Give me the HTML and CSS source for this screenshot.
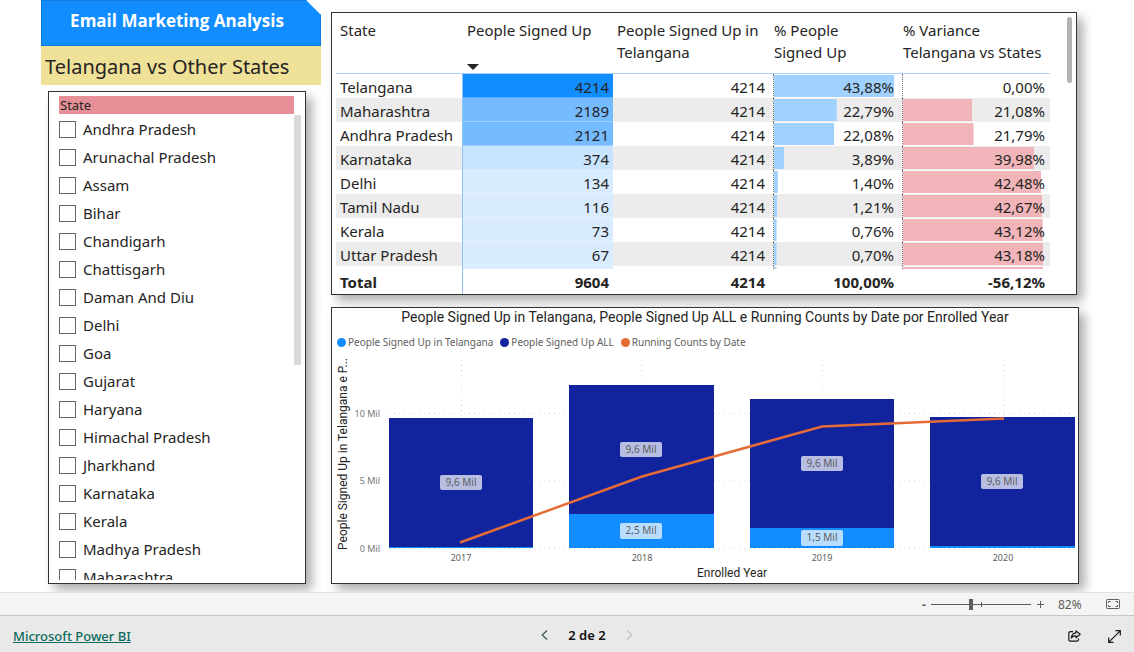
FILE: index.html
```html
<!DOCTYPE html>
<html lang="en">
<head>
<meta charset="utf-8">
<title>Email Marketing Analysis</title>
<link rel="stylesheet" href="styles.css">
</head>
<body>
<main class="report">
  <section class="side">
    <h1 class="banner">Email Marketing Analysis</h1>
    <h2 class="subtitle">Telangana vs Other States</h2>
    <div class="card slicer">
      <h3 class="slicer-title">State</h3>
      <div class="slicer-body">
        <div class="slicer-list">
          <label class="option"><input type="checkbox">Andhra Pradesh</label>
          <label class="option"><input type="checkbox">Arunachal Pradesh</label>
          <label class="option"><input type="checkbox">Assam</label>
          <label class="option"><input type="checkbox">Bihar</label>
          <label class="option"><input type="checkbox">Chandigarh</label>
          <label class="option"><input type="checkbox">Chattisgarh</label>
          <label class="option"><input type="checkbox">Daman And Diu</label>
          <label class="option"><input type="checkbox">Delhi</label>
          <label class="option"><input type="checkbox">Goa</label>
          <label class="option"><input type="checkbox">Gujarat</label>
          <label class="option"><input type="checkbox">Haryana</label>
          <label class="option"><input type="checkbox">Himachal Pradesh</label>
          <label class="option"><input type="checkbox">Jharkhand</label>
          <label class="option"><input type="checkbox">Karnataka</label>
          <label class="option"><input type="checkbox">Kerala</label>
          <label class="option"><input type="checkbox">Madhya Pradesh</label>
          <label class="option"><input type="checkbox">Maharashtra</label>
        </div>
        <div class="slicer-scroll"></div>
      </div>
    </div>
  </section>

  <section class="content">
    <div class="card table-card">
      <table class="data">
        <colgroup><col class="c-state"><col class="c-signed"><col class="c-tel"><col class="c-pct"><col class="c-var"></colgroup>
        <thead>
          <tr>
            <th scope="col">State</th>
            <th scope="col" class="sorted"><span>People Signed Up</span><svg class="sort" width="12" height="6" viewBox="0 0 12 6"><path d="M0 0h12L6 6z" fill="#252423"/></svg></th>
            <th scope="col">People Signed Up in<br>Telangana</th>
            <th scope="col">% People<br>Signed Up</th>
            <th scope="col">% Variance<br>Telangana vs States</th>
          </tr>
        </thead>
        <tbody>
          <tr><td>Telangana</td><td class="heat h1">4214</td><td>4214</td><td class="bar blue" style="--w:94%">43,88%</td><td class="bar red" style="--w:0%">0,00%</td></tr>
          <tr><td>Maharashtra</td><td class="heat h2">2189</td><td>4214</td><td class="bar blue" style="--w:49%">22,79%</td><td class="bar red" style="--w:47%">21,08%</td></tr>
          <tr><td>Andhra Pradesh</td><td class="heat h2">2121</td><td>4214</td><td class="bar blue" style="--w:47%">22,08%</td><td class="bar red" style="--w:48%">21,79%</td></tr>
          <tr><td>Karnataka</td><td class="heat h3">374</td><td>4214</td><td class="bar blue" style="--w:8%">3,89%</td><td class="bar red" style="--w:89%">39,98%</td></tr>
          <tr><td>Delhi</td><td class="heat h4">134</td><td>4214</td><td class="bar blue" style="--w:3%">1,40%</td><td class="bar red" style="--w:94%">42,48%</td></tr>
          <tr><td>Tamil Nadu</td><td class="heat h4">116</td><td>4214</td><td class="bar blue" style="--w:2.5%">1,21%</td><td class="bar red" style="--w:94.5%">42,67%</td></tr>
          <tr><td>Kerala</td><td class="heat h4">73</td><td>4214</td><td class="bar blue" style="--w:2%">0,76%</td><td class="bar red" style="--w:95%">43,12%</td></tr>
          <tr><td>Uttar Pradesh</td><td class="heat h4">67</td><td>4214</td><td class="bar blue" style="--w:2%">0,70%</td><td class="bar red" style="--w:95.5%">43,18%</td></tr>
          <tr class="peek"><td></td><td class="heat h4"></td><td></td><td class="bar blue" style="--w:2%"></td><td class="bar red" style="--w:95.5%"></td></tr>
        </tbody>
        <tfoot>
          <tr><th scope="row">Total</th><td>9604</td><td>4214</td><td>100,00%</td><td>-56,12%</td></tr>
        </tfoot>
      </table>
      <div class="table-scroll"></div>
    </div>

    <div class="card chart-card">
      <h3 class="chart-title">People Signed Up in Telangana, People Signed Up ALL e Running Counts by Date por Enrolled Year</h3>
      <ul class="legend">
        <li><i class="dot dot-tel"></i>People Signed Up in Telangana</li>
        <li><i class="dot dot-all"></i>People Signed Up ALL</li>
        <li><i class="dot dot-run"></i>Running Counts by Date</li>
      </ul>
      <svg class="plot" viewBox="0 0 746 230" role="img" aria-label="People signed up by enrolled year">
        <g class="grid">
          <path d="M57 61.500H742M57 129H742M57 196.500H742"/>
          <path d="M129.500 8V197M310 8V197M490.500 8V197M671.500 8V197"/>
        </g>
        <g fill="#12239e">
          <rect x="57" y="66" width="144" height="130"/>
          <rect x="237" y="33" width="145" height="130"/>
          <rect x="418" y="47" width="144" height="129"/>
          <rect x="598" y="65" width="145" height="129"/>
        </g>
        <g fill="#118dff">
          <rect x="57" y="195" width="144" height="1"/>
          <rect x="237" y="162" width="145" height="34"/>
          <rect x="418" y="176" width="144" height="20"/>
          <rect x="598" y="194" width="145" height="2"/>
        </g>
        <g class="badges">
          <rect x="108" y="123" width="42" height="15" rx="2"/>
          <rect x="288" y="90" width="42" height="15" rx="2"/>
          <rect x="288" y="171" width="42" height="16" rx="2"/>
          <rect x="469" y="104" width="42" height="15" rx="2"/>
          <rect x="469" y="178" width="42" height="16" rx="2"/>
          <rect x="649" y="122" width="42" height="15" rx="2"/>
        </g>
        <g class="badge-text">
          <text x="129" y="134">9,6 Mil</text>
          <text x="309" y="101">9,6 Mil</text>
          <text x="309" y="182">2,5 Mil</text>
          <text x="490" y="115">9,6 Mil</text>
          <text x="490" y="189">1,5 Mil</text>
          <text x="670" y="133">9,6 Mil</text>
        </g>
        <path d="M128 190.500L310 124.500L490 74.500L672 66.500" fill="none" stroke="#e66c37" stroke-width="2.500"/>
        <g class="ticks-y">
          <text x="48" y="65">10 Mil</text>
          <text x="48" y="132">5 Mil</text>
          <text x="48" y="200">0 Mil</text>
        </g>
        <g class="ticks-x">
          <text x="129" y="209">2017</text>
          <text x="310" y="209">2018</text>
          <text x="490" y="209">2019</text>
          <text x="671" y="209">2020</text>
        </g>
        <text class="axis-title" x="400" y="225">Enrolled Year</text>
        <text class="axis-title" transform="translate(15 102) rotate(-90)">People Signed Up in Telangana e P...</text>
      </svg>
    </div>
  </section>
</main>

<div class="zoombar">
  <button type="button" class="step minus" aria-label="Zoom out">-</button>
  <input class="zoom-range" type="range" min="0" max="100" value="40" aria-label="Zoom">
  <button type="button" class="step" aria-label="Zoom in"><svg width="7" height="7" viewBox="0 0 7 7"><path d="M0 3.500h7M3.500 0v7" stroke="#605e5c"/></svg></button>
  <output class="zoom-value">82%</output>
  <button type="button" class="fit" aria-label="Fit to page">
    <svg width="14" height="10" viewBox="0 0 14 10" fill="none" stroke="#605e5c"><rect x=".5" y=".5" width="13" height="9" rx="1"/><path d="M4.500 2.500h-2v1.500M2.500 6v1.500h2M9.500 2.500h2v1.500M11.500 6v1.500h-2"/></svg>
  </button>
</div>

<footer class="footer">
  <a class="brand" href="#">Microsoft Power BI</a>
  <nav class="pager">
    <button type="button" aria-label="Previous page"><svg width="7" height="10" viewBox="0 0 7 10" fill="none" stroke="#40585a" stroke-width="1.300"><path d="M6 .5L1.200 5L6 9.500"/></svg></button>
    <span>2 de 2</span>
    <button type="button" aria-label="Next page" disabled><svg width="7" height="10" viewBox="0 0 7 10" fill="none" stroke="#c2c2c2" stroke-width="1.300"><path d="M1 .5L5.800 5L1 9.500"/></svg></button>
  </nav>
  <div class="actions">
    <button type="button" aria-label="Share"><svg width="13" height="12" viewBox="0 0 13 12" fill="none" stroke="#1b1a19" stroke-width="1.200"><path d="M5 1.600H2.500Q.8 1.600 .8 3.300V9.500Q.8 11.200 2.500 11.200H8.800Q10.500 11.200 10.500 9.500V8.500"/><path d="M8 .9L12.200 4.300L8 7.700V5.900Q4.800 5.700 3.300 8Q3.700 3.200 8 2.800Z" stroke-linejoin="round"/></svg></button>
    <button type="button" aria-label="Full screen"><svg width="13" height="13" viewBox="0 0 13 13" fill="none" stroke="#1b1a19" stroke-width="1.200"><path d="M.8 12.200L12.200 .8M7.500 .7h4.800v4.800M.7 7.500v4.800h4.800"/></svg></button>
  </div>
</footer>
</body>
</html>
```
FILE: styles.css
```css
* { box-sizing: border-box; }

body {
  margin: 0;
  height: 100vh;
  display: flex;
  flex-direction: column;
  overflow: hidden;
  background: #fff;
  color: #252423;
  font-family: "Noto Sans", "Open Sans", sans-serif;
  font-size: 15px;
}

h1, h2, h3, ul { margin: 0; padding: 0; }
button { border: 0; padding: 0; background: none; font: inherit; color: inherit; }
svg { display: block; }

.report {
  flex: 1;
  min-height: 0;
  display: grid;
  grid-template-columns: 280fr 748fr;
  gap: 10px;
  padding: 0 55px 8px 41px;
}

.card {
  background: #fff;
  border: 1px solid #333;
  box-shadow: 6px 6px 10px rgba(0, 0, 0, 0.32);
}

/* left column */
.side { display: flex; flex-direction: column; min-width: 0; min-height: 0; }

.banner {
  height: 46px;
  line-height: 40px;
  text-align: center;
  font-family: "Open Sans", sans-serif;
  font-size: 17px;
  font-weight: 700;
  color: #fff;
  background: #118dff;
  border: 1px solid #0f7bdf;
  padding-right: 8px;
  clip-path: polygon(0 0, calc(100% - 15px) 0, 100% 15px, 100% 100%, 0 100%);
}

.subtitle {
  height: 39px;
  line-height: 41px;
  padding-left: 4px;
  font-size: 20px;
  font-weight: 400;
  white-space: nowrap;
  background: #f0e199;
}

.slicer {
  flex: 1;
  min-height: 0;
  margin: 6px 15px 0 7px;
  padding: 4px 4px 3px 10px;
  display: flex;
  flex-direction: column;
}

.slicer-title {
  height: 18px;
  line-height: 18px;
  margin-right: 7px;
  padding-left: 1px;
  font-size: 13px;
  font-weight: 400;
  background: #e68f96;
}

.slicer-body { flex: 1; min-height: 0; display: flex; overflow: hidden; }
.slicer-list { flex: 1; }
.slicer-scroll { width: 7px; height: 250px; margin-top: 1px; background: #dadada; }

.option { display: flex; align-items: center; gap: 7px; height: 28px; padding-top: 2px; }
.option input {
  appearance: none;
  width: 17px;
  height: 17px;
  margin: 0;
  border: 1px solid #666;
  background: #fff;
}

/* right column */
.content { display: flex; flex-direction: column; gap: 12px; padding-top: 12px; min-width: 0; min-height: 0; }

.table-card { display: flex; align-items: flex-start; justify-content: space-between; margin-right: 2px; padding: 0 4px; }
.table-scroll { width: 5px; height: 66px; margin-top: 4px; border-radius: 3px; background: #b3b3b3; }

.data { flex: 0 1 714px; table-layout: fixed; border-collapse: separate; border-spacing: 0; }
.c-state { width: 126px; }
.c-signed { width: 151px; }
.c-tel { width: 160px; }
.c-pct { width: 129px; }
.c-var { width: 148px; }

.data th { font-weight: 400; text-align: left; }
.data thead th {
  height: 61px;
  padding: 6px 0 0 4px;
  line-height: 22px;
  vertical-align: top;
  border-bottom: 1px solid #a9d3ff;
  white-space: nowrap;
}
.data thead th:nth-child(n+4) { padding-left: 1px; }
.data thead .sorted { padding-left: 5px; }
.data thead .sort { margin-top: 23px; }

.data td { height: 24px; padding: 2px 8px 0 4px; line-height: 22px; text-align: right; }
.data td:first-child { text-align: left; padding-right: 0; white-space: nowrap; }
.data td:nth-child(2) { padding-right: 4px; border-left: 1px solid #8fc3f8; }
.data td:nth-child(5) { padding-right: 5px; }
.data tbody tr:nth-child(even) { background: #ececec; }

.heat { box-shadow: inset 0 -1px rgba(255, 255, 255, 0.3); }
.h1 { background-color: #118dff; }
.h2 { background-color: #75bbff; }
.h3 { background-color: #c9e4ff; }
.h4 { background-color: #d8ebff; }

.bar {
  border-left: 1px dotted #777;
  background-repeat: no-repeat;
  background-position: 0 1px;
  background-size: var(--w) calc(100% - 2px);
}
.blue { background-image: linear-gradient(#a0d1ff, #a0d1ff); }
.red { background-image: linear-gradient(#f0b4b9, #f0b4b9); }

.data .peek td { height: 3px; padding: 0; line-height: 0; }
.data .peek .bar { background-size: var(--w) 100%; }

.data tfoot th, .data tfoot td { height: 25px; padding-top: 1px; font-weight: 700; }
.data tfoot th { padding-left: 4px; line-height: 22px; }

/* chart */
.chart-card { flex: 1; min-height: 0; display: flex; flex-direction: column; }
.chart-title { line-height: 18px; text-align: center; font-size: 14px; font-weight: 400; white-space: nowrap; font-family: Roboto, sans-serif; }
.legend {
  display: flex;
  gap: 7px;
  margin-top: 7px;
  padding-left: 5px;
  list-style: none;
  font-size: 10px;
  line-height: 18px;
  color: #605e5c;
  white-space: nowrap;
}
.legend li { display: flex; align-items: center; gap: 2px; }
.dot { width: 9px; height: 9px; border-radius: 50%; }
.dot-tel { background: #118dff; }
.dot-all { background: #12239e; }
.dot-run { background: #e66c37; }

.plot { flex: 1; min-height: 0; width: 100%; }
.grid { fill: none; stroke: #d9d9d9; stroke-dasharray: 1 4; }
.badges { fill: #fff; fill-opacity: 0.7; }
.badge-text { font-size: 10px; fill: #605e5c; text-anchor: middle; }
.ticks-y { font-size: 9px; fill: #777; text-anchor: end; }
.ticks-x { font-size: 9px; fill: #605e5c; text-anchor: middle; }
.axis-title { font-family: Roboto, sans-serif; font-size: 12px; fill: #252423; text-anchor: middle; }

/* status bar */
.zoombar {
  height: 23px;
  display: flex;
  align-items: center;
  justify-content: flex-end;
  padding-right: 14px;
  background: #f4f4f4;
  border-top: 1px solid #e1e1e1;
  color: #605e5c;
  font-size: 12px;
}
.step { display: grid; place-items: center; width: 19px; height: 20px; }
.minus { width: 14px; font-weight: 700; }
.zoom-range {
  appearance: none;
  width: 100px;
  height: 12px;
  margin: 0;
  background:
    linear-gradient(#605e5c, #605e5c) 50% 50% / 1px 5px no-repeat,
    linear-gradient(#605e5c, #605e5c) 0 50% / 100% 1px no-repeat;
}
.zoom-range::-webkit-slider-thumb { appearance: none; width: 4px; height: 11px; background: #605e5c; }
.zoom-value { width: 36px; margin: 0 12px 0 8px; }

.footer {
  height: 37px;
  display: flex;
  align-items: center;
  justify-content: space-between;
  padding-left: 13px;
  background: #e9e9e9;
  border-top: 1px solid #c6c6c6;
  font-size: 13px;
}
.brand { color: #0b6a5c; text-decoration: underline; font-weight: 500; padding-top: 3px; }
.pager { display: flex; align-items: center; color: #111; font-weight: 600; padding-top: 2px; }
.pager button { display: grid; place-items: center; width: 48px; height: 32px; }
.actions { display: flex; padding: 4px 0 0 11px; }
.actions button { display: grid; place-items: center; width: 40px; height: 32px; }
```
